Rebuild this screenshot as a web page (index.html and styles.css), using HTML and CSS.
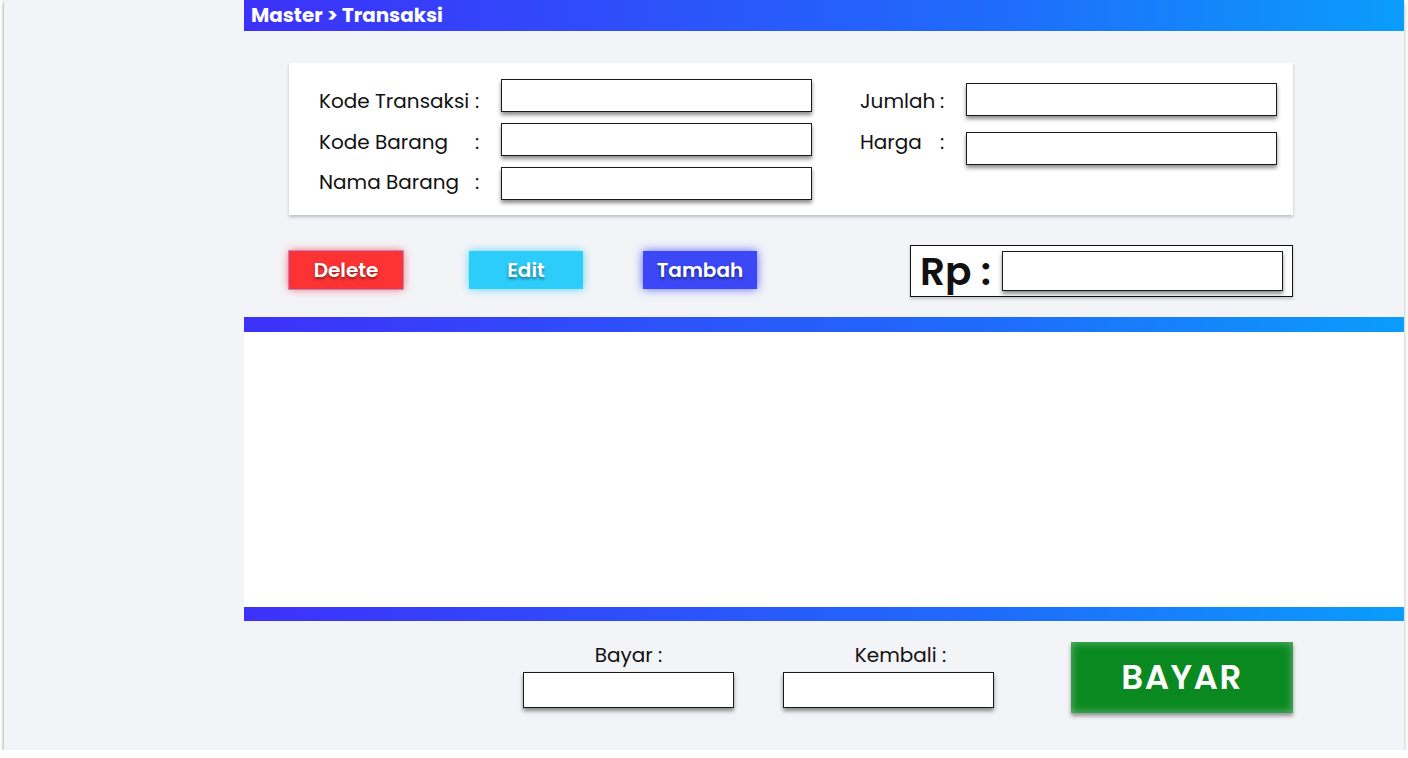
FILE: index.html
```html
<!DOCTYPE html>
<html lang="id">
<head>
<meta charset="utf-8">
<title>Master &gt; Transaksi</title>
<link rel="stylesheet" href="styles.css">
</head>
<body>
<div class="frame">
  <aside class="sidebar"></aside>
  <main class="main">
    <div class="titlebar">Master &gt; Transaksi</div>

    <section class="card">
      <div class="labels labels-left">
        <div class="lbl"><span class="name">Kode Transaksi</span><span class="colon">:</span></div>
        <div class="lbl"><span class="name">Kode Barang</span><span class="colon">:</span></div>
        <div class="lbl"><span class="name">Nama Barang</span><span class="colon">:</span></div>
      </div>
      <div class="inputs inputs-left">
        <div class="input"></div>
        <div class="input"></div>
        <div class="input"></div>
      </div>
      <div class="labels labels-right">
        <div class="lbl"><span class="name">Jumlah</span><span class="colon">:</span></div>
        <div class="lbl"><span class="name">Harga</span><span class="colon">:</span></div>
      </div>
      <div class="inputs inputs-right">
        <div class="input"></div>
        <div class="input"></div>
      </div>
    </section>

    <div class="actions">
      <button class="btn btn-delete">Delete</button>
      <button class="btn btn-edit">Edit</button>
      <button class="btn btn-add">Tambah</button>
      <div class="total">
        <span class="rp">Rp :</span>
        <div class="input input-total"></div>
      </div>
    </div>

    <div class="bar"></div>
    <div class="table"></div>
    <div class="bar bar-bottom"></div>

    <div class="payment">
      <div class="pay-field">
        <span class="pay-lbl">Bayar :</span>
        <div class="input input-pay"></div>
      </div>
      <div class="pay-field">
        <span class="pay-lbl pay-lbl-shift">Kembali :</span>
        <div class="input input-pay"></div>
      </div>
      <button class="btn-bayar">BAYAR</button>
    </div>
  </main>
</div>
</body>
</html>
```
FILE: styles.css
```css
* { box-sizing: border-box; }
html, body { margin: 0; padding: 0; background: #ffffff; }
body {
  font-family: "Poppins", "Open Sans", "Noto Sans", sans-serif;
  color: #111;
}
.frame {
  margin-left: 4px;
  width: 1400px;
  height: 750px;
  background: #f3f4f8;
  box-shadow: 0 3px 4px rgba(0,0,0,.3), -1px 0 2px rgba(0,0,0,.12);
  display: grid;
  grid-template-columns: 240px 1160px;
}
.main { display: flex; flex-direction: column; }
.titlebar {
  height: 31px;
  background: linear-gradient(90deg, #3d31f9 0%, #1f6cfb 65%, #0a9dfb 100%);
  color: #fff;
  font-weight: 700;
  font-size: 19.9px;
  padding-left: 7px;
  line-height: 31px;
}

/* form card */
.card {
  margin: 32px 0 0 45px;
  width: 1004px;
  height: 152px;
  background: #fff;
  box-shadow: 0 2px 3px rgba(0,0,0,.22);
  display: flex;
  align-items: flex-start;
  padding-left: 30px;
}
.labels { display: flex; flex-direction: column; padding-top: 18px; }
.lbl { display: flex; font-size: 20px; line-height: 40.5px; height: 40.5px; color: #111; }
.labels-left { width: 182px; }
.labels-left .name { width: 156px; white-space: nowrap; }
.labels-right { width: 106px; margin-left: 48px; }
.labels-right .name { width: 80px; }
.inputs { display: flex; flex-direction: column; }
.inputs-left { padding-top: 16px; gap: 11px; }
.inputs-left .input { width: 311px; }
.inputs-right { padding-top: 20px; gap: 16px; }
.inputs-right .input { width: 311px; }
.input {
  background: #fff;
  border: 1.5px solid #1a1a1a;
  box-shadow: 0 3px 4px rgba(0,0,0,.45);
  height: 33px;
}

/* actions row */
.actions {
  display: flex;
  align-items: flex-start;
  margin: 30px 0 0 45px;
  height: 52px;
}
.btn {
  margin-top: 6px;
  width: 114px;
  height: 38px;
  border: none;
  color: #fff;
  font-family: inherit;
  font-weight: 600;
  font-size: 20px;
  line-height: 38px;
  text-shadow: 0 2px 3px rgba(0,0,0,.45);
  padding: 0;
  cursor: pointer;
}
.btn-delete { background: #fd3333; box-shadow: 0 0 8px rgba(253,51,51,.8); outline: 1px solid rgba(120,100,220,.55); }
.btn-edit { background: #2ccdfa; box-shadow: 0 0 8px rgba(44,205,250,.8); margin-left: 66px; }
.btn-add { background: #3c48f6; box-shadow: 0 0 9px rgba(60,72,246,.85); margin-left: 60px; }
.total {
  margin-left: 153px;
  width: 383px;
  height: 52px;
  background: #fff;
  border: 1px solid #111;
  box-shadow: 0 2px 3px rgba(0,0,0,.2);
  display: flex;
  align-items: center;
  padding-left: 9px;
}
.rp { font-size: 39px; font-weight: 600; width: 82px; line-height: 1; }
.input-total { width: 281px; height: 40px; }

/* table area */
.bar {
  margin-top: 20px;
  height: 15px;
  background: linear-gradient(90deg, #3d31f9 0%, #1f6cfb 65%, #0a9dfb 100%);
}
.table { height: 275px; background: #fff; }
.bar-bottom { margin-top: 0; height: 14px; }

/* payment */
.payment {
  display: flex;
  align-items: flex-start;
  margin: 19px 0 0 279px;
}
.pay-field {
  display: flex;
  flex-direction: column;
  align-items: center;
  width: 211px;
  gap: 2px;
}
.pay-field + .pay-field { margin-left: 49px; }
.pay-lbl { font-size: 20px; line-height: 30px; height: 30px; }
.pay-lbl-shift { margin-left: 24px; }
.input-pay { width: 211px; height: 36px; }
.btn-bayar {
  margin: 2px 0 0 77px;
  width: 222px;
  height: 71px;
  background: #0a8920;
  border: none;
  color: #fff;
  font-family: inherit;
  font-weight: 600;
  font-size: 34px;
  letter-spacing: 1.5px;
  box-shadow: inset 0 0 10px rgba(255,255,255,.4), 0 3px 4px rgba(0,0,0,.4);
  padding: 0;
}
```
